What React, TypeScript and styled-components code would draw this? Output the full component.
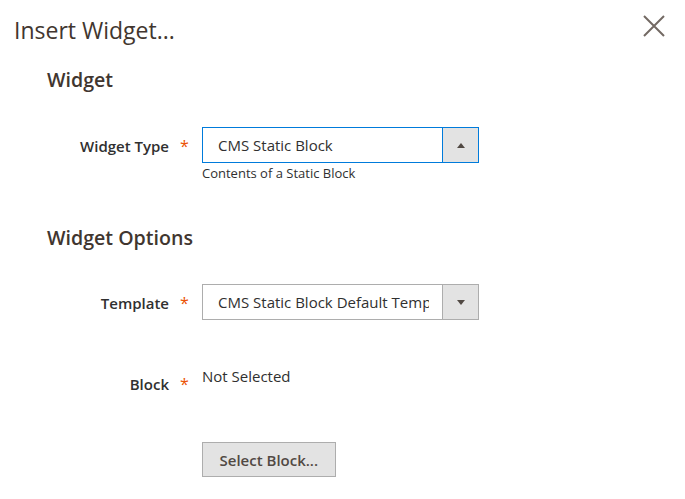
import React from "react";
import styled, { createGlobalStyle } from "styled-components";

const Global = createGlobalStyle`
  html, body { margin: 0; padding: 0; background: #ffffff; }
  body { font-family: "Open Sans", "Noto Sans", sans-serif; color: #303030; }
  * { box-sizing: border-box; }
`;

const Modal = styled.div`
  width: 685px;
  height: 499px;
  padding: 14px 20px 0 14px;
  background: #ffffff;
  overflow: hidden;
`;

const Header = styled.header`
  display: flex;
  justify-content: space-between;
  align-items: flex-start;
`;

const Title = styled.h1`
  margin: 0;
  font-size: 23px;
  line-height: 32px;
  font-weight: 400;
  color: #41362f;
`;

const CloseButton = styled.button`
  margin-top: 1px;
  width: 22px;
  height: 22px;
  padding: 0;
  border: 0;
  background: none;
  display: flex;
  cursor: pointer;
`;

const Content = styled.div`
  padding-left: 33px;
`;

const Fieldset = styled.section<{ $gap: number }>`
  margin-top: ${(p) => p.$gap}px;
`;

const Legend = styled.h2`
  margin: 0;
  font-size: 19.6px;
  line-height: 28px;
  font-weight: 600;
  color: #41362f;
`;

const Field = styled.div<{ $gap: number }>`
  display: grid;
  grid-template-columns: 122px 33px 277px;
  margin-top: ${(p) => p.$gap}px;
`;

const Label = styled.label`
  text-align: right;
  font-size: 15px;
  line-height: 20px;
  font-weight: 600;
  color: #303030;
  padding-top: 9px;
`;

const Required = styled.span`
  color: #eb5202;
  font-size: 16px;
  line-height: 20px;
  padding-top: 9px;
  padding-left: 11px;
`;

const Control = styled.div`
  grid-column: 3;
  display: flex;
  flex-direction: column;
  align-items: flex-start;
`;

const Select = styled.div<{ $focused?: boolean }>`
  display: flex;
  width: 277px;
  height: 36px;
  border: 1px solid ${(p) => (p.$focused ? "#007bdb" : "#adadad")};
  background: #ffffff;
`;

const SelectValue = styled.div`
  flex: 1;
  min-width: 0;
  margin: 0 13px 0 15px;
  padding-top: 7px;
  font-size: 15px;
  line-height: 20px;
  color: #303030;
  white-space: nowrap;
  overflow: hidden;
`;

const SelectArrow = styled.div<{ $focused?: boolean; $up?: boolean }>`
  width: 36px;
  flex: 0 0 36px;
  border-left: 1px solid ${(p) => (p.$focused ? "#007bdb" : "#adadad")};
  background: #e3e3e3;
  display: flex;
  align-items: center;
  justify-content: center;

  &::after {
    content: "";
    width: 0;
    height: 0;
    border-left: 4.5px solid transparent;
    border-right: 4.5px solid transparent;
    ${(p) =>
      p.$up
        ? "border-bottom: 5px solid #514943;"
        : "border-top: 5px solid #514943;"}
  }
`;

const Note = styled.div`
  margin-top: 2px;
  font-size: 13px;
  line-height: 17px;
  color: #303030;
`;

const Value = styled.div`
  padding-top: 1px;
  font-size: 15px;
  line-height: 20px;
  color: #303030;
`;

const ActionRow = styled.div`
  display: grid;
  grid-template-columns: 122px 33px 277px;
  margin-top: 48px;
`;

const Button = styled.button`
  grid-column: 3;
  justify-self: start;
  height: 35px;
  padding: 0 16.5px;
  border: 1px solid #adadad;
  background: #e3e3e3;
  color: #514943;
  font-family: "Open Sans", "Noto Sans", sans-serif;
  font-size: 15px;
  line-height: 20px;
  font-weight: 600;
  cursor: pointer;
`;

export default function App() {
  return (
    <>
      <Global />
      <Modal>
        <Header>
          <Title>Insert Widget...</Title>
          <CloseButton aria-label="Close">
            <svg width="22" height="22" viewBox="0 0 22 22">
              <path d="M1 1 L21 21 M21 1 L1 21" stroke="#736963" strokeWidth="2" fill="none" />
            </svg>
          </CloseButton>
        </Header>
        <Content>
          <Fieldset $gap={20}>
            <Legend>Widget</Legend>
            <Field $gap={33}>
              <Label>Widget Type</Label>
              <Required>*</Required>
              <Control>
                <Select $focused>
                  <SelectValue>CMS Static Block</SelectValue>
                  <SelectArrow $focused $up />
                </Select>
                <Note>Contents of a Static Block</Note>
              </Control>
            </Field>
          </Fieldset>
          <Fieldset $gap={42}>
            <Legend>Widget Options</Legend>
            <Field $gap={32}>
              <Label>Template</Label>
              <Required>*</Required>
              <Control>
                <Select>
                  <SelectValue>CMS Static Block Default Template</SelectValue>
                  <SelectArrow />
                </Select>
              </Control>
            </Field>
            <Field $gap={45}>
              <Label>Block</Label>
              <Required>*</Required>
              <Control>
                <Value>Not Selected</Value>
              </Control>
            </Field>
            <ActionRow>
              <Button>Select Block...</Button>
            </ActionRow>
          </Fieldset>
        </Content>
      </Modal>
    </>
  );
}
